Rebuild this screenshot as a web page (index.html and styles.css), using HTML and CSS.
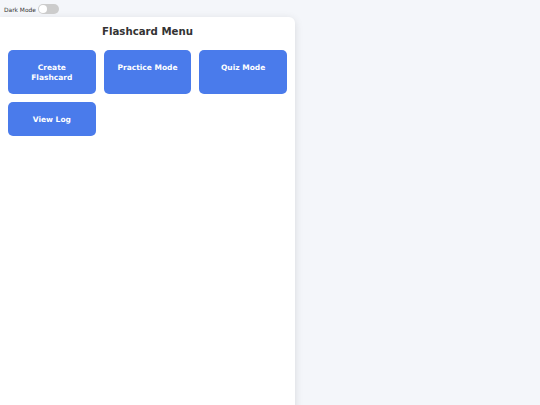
FILE: index.html
```html
<!DOCTYPE html>
<html lang="en">
<head>
<meta charset="utf-8">
<title>Flashcard Menu</title>
<link rel="stylesheet" href="styles.css">
</head>
<body>
<div class="topbar">
  <span class="toggle-label">Dark Mode</span>
  <span class="toggle"><span class="knob"></span></span>
</div>
<main class="card">
  <h1 class="title">Flashcard Menu</h1>
  <div class="menu">
    <button class="menu-btn">Create Flashcard</button>
    <button class="menu-btn">Practice Mode</button>
    <button class="menu-btn">Quiz Mode</button>
    <button class="menu-btn">View Log</button>
  </div>
</main>
</body>
</html>
```

FILE: styles.css
```css
html, body {
  margin: 0;
  padding: 0;
  height: 100%;
}
body {
  background: #f4f6fa;
  font-family: "DejaVu Sans", sans-serif;
  color: #333;
  overflow: hidden;
}
.topbar {
  display: flex;
  align-items: center;
  gap: 2px;
  padding: 4px 4px 3px;
  height: 10px;
}
.toggle-label {
  font-size: 5.9px;
  line-height: 10px;
  padding-top: 1px;
  color: #333;
}
.toggle {
  display: flex;
  align-items: center;
  width: 21px;
  height: 10px;
  border-radius: 5px;
  background: #cccccc;
  padding: 0 1px;
  box-sizing: border-box;
}
.knob {
  width: 8px;
  height: 8px;
  border-radius: 50%;
  background: #fff;
}
.card {
  width: 295px;
  min-height: 400px;
  background: #fff;
  border-radius: 0 6px 0 0;
  box-shadow: 0 2px 8px rgba(0, 0, 0, 0.12);
  padding: 9px 8px 8px;
  box-sizing: border-box;
}
.title {
  margin: 0 0 12px;
  font-size: 10.2px;
  line-height: 12px;
  font-weight: bold;
  text-align: center;
  color: #333;
}
.menu {
  display: grid;
  grid-template-columns: repeat(3, 1fr);
  gap: 8px;
}
.menu-btn {
  display: flex;
  flex-direction: column;
  justify-content: flex-start;
  align-items: center;
  text-align: center;
  border: none;
  border-radius: 5px;
  background: #4a7beb;
  color: #fff;
  font-family: "DejaVu Sans", sans-serif;
  font-weight: bold;
  font-size: 7.5px;
  line-height: 10px;
  padding: 13px 10px 11px;
  margin: 0;
}
```
